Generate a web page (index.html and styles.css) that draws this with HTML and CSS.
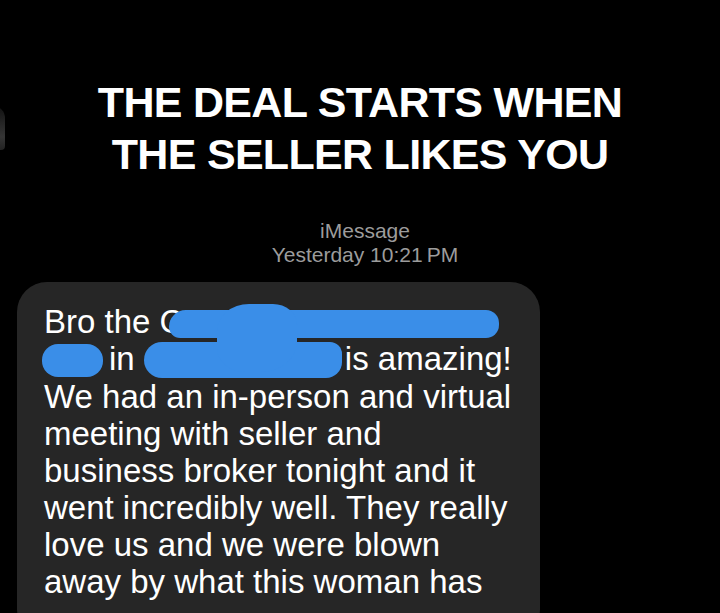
FILE: index.html
```html
<!DOCTYPE html>
<html lang="en">
<head>
    <meta charset="UTF-8">
    <meta name="viewport" content="width=device-width, initial-scale=1.0">
    <title>The deal starts when the seller likes you</title>
    <link rel="stylesheet" href="styles.css">
</head>
<body>

    <div class="edge-glow"></div>

    <h1 class="titulo">THE DEAL STARTS WHEN<br>THE SELLER LIKES YOU</h1>

    <div class="meta">
        <p>iMessage</p>
        <p>Yesterday 10:21&#8201;PM</p>
    </div>

    <div class="bubble">
        <span class="blot blot-cross"></span>
        <p>
            Bro the C<span class="blot blot-1"></span><br>
            <span class="blot blot-2"></span>in <span class="blot blot-3"></span>is amazing!<br>
            We had an in-person and virtual<br>
            meeting with seller and<br>
            business broker tonight and it<br>
            went incredibly well. They really<br>
            love us and we were blown<br>
            away by what this woman has
        </p>
    </div>

</body>
</html>
```

FILE: styles.css
```css
html, body {
    overflow: hidden;
}

body {
    margin: 0;
    padding: 0;
    background-color: #000;
    color: #fff;
    font-family: "Liberation Sans", Arial, sans-serif;
    position: relative;
}

p {
    margin: 0;
}

/* the grey bit peeking in on the left edge */
.edge-glow {
    position: absolute;
    left: -14px;
    top: 106px;
    width: 19px;
    height: 44px;
    border-radius: 0 12px 4px 0;
    background: linear-gradient(to bottom, #111, #353535 70%, #222);
}

.titulo {
    margin: 76px 0 0 0;
    text-align: center;
    font-size: 43px;
    line-height: 52px;
    letter-spacing: -0.7px;
    font-weight: bold;
    color: #fff;
}

.meta {
    margin-top: 39px;
    padding-left: 10px;
    text-align: center;
    font-size: 21px;
    line-height: 24px;
    color: #9c9c9c;
}

.bubble {
    position: relative;
    margin: 15px 0 0 17px;
    width: 523px;
    box-sizing: border-box;
    padding: 21px 10px 40px 27px;
    background-color: #262626;
    border-radius: 30px;
    font-size: 33px;
    line-height: 37px;
    white-space: nowrap;
}

/* blue scribbles over names */
.blot {
    display: inline-block;
    background-color: #3a8ee8;
    vertical-align: -5px;
}

.blot-1 {
    width: 330px;
    height: 28px;
    margin-left: -14px;
    border-radius: 18px 14px 14px 12px;
}

.blot-2 {
    width: 61px;
    height: 33px;
    margin-left: -2px;
    margin-right: 6px;
    vertical-align: -7px;
    border-radius: 16px;
}

.blot-3 {
    width: 198px;
    height: 36px;
    margin-right: 3px;
    vertical-align: -8px;
    border-radius: 18px 12px 16px 18px;
}

.blot-cross {
    position: absolute;
    left: 200px;
    top: 22px;
    width: 80px;
    height: 68px;
    border-radius: 40% 30% 45% 35%;
}
```
